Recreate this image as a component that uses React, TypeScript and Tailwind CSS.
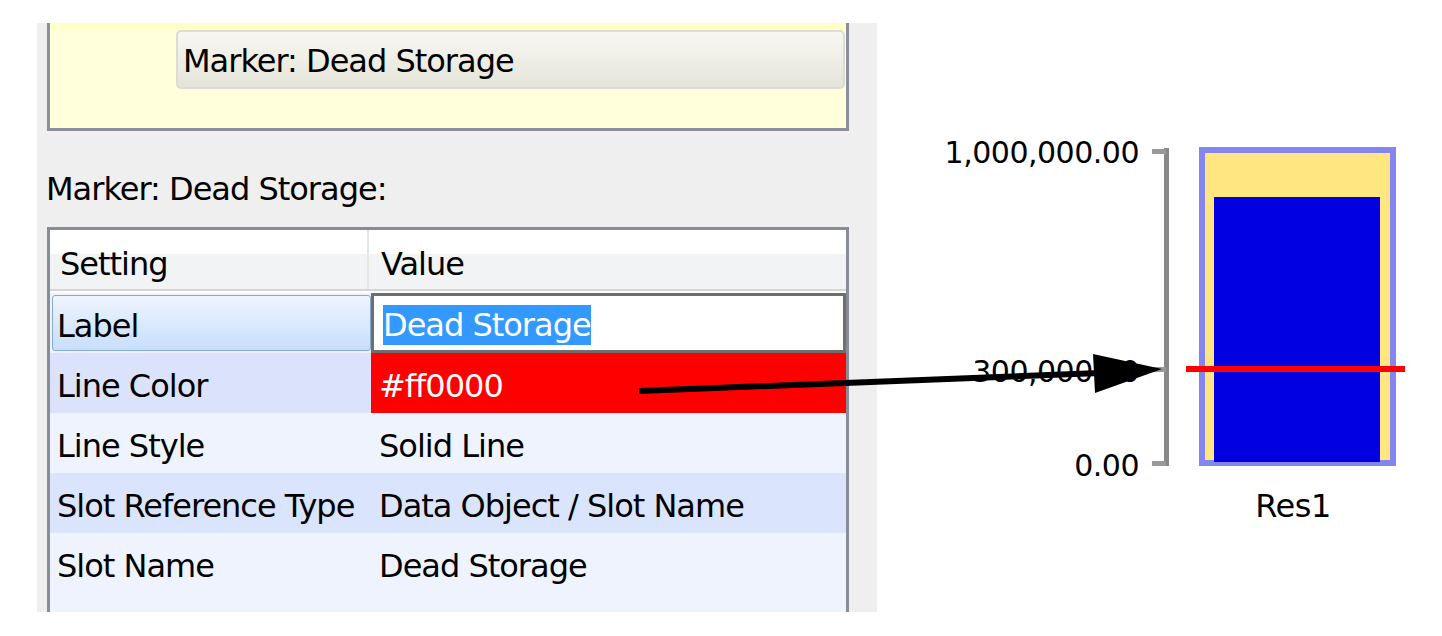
import React from "react";

type Row = { setting: string; value: string; bg: string };

const rows: Row[] = [
  { setting: "Line Style", value: "Solid Line", bg: "bg-[#eef3fe]" },
  { setting: "Slot Reference Type", value: "Data Object / Slot Name", bg: "bg-[#dae4fc]" },
  { setting: "Slot Name", value: "Dead Storage", bg: "bg-[#eef3fe]" },
];

function SettingRow({ setting, value, bg }: Row) {
  return (
    <div className={`flex h-[60px] items-center pt-[5px] ${bg}`}>
      <div className="w-[321px] pl-[7px] whitespace-nowrap">{setting}</div>
      <div className="pl-[8px] whitespace-nowrap">{value}</div>
    </div>
  );
}

function Chart() {
  return (
    <svg className="w-[565px] h-[636px] shrink-0" viewBox="877 0 565 636">
      {/* y axis */}
      <rect x={1164} y={148} width={5} height={318} fill="#888888" />
      <rect x={1152} y={149} width={14} height={5} fill="#999999" />
      <rect x={1152} y={367} width={14} height={5} fill="#999999" />
      <rect x={1152} y={461} width={14} height={5} fill="#999999" />
      <g
        fontFamily="DejaVu Sans, sans-serif"
        fontSize={30}
        letterSpacing={-0.5}
        textAnchor="end"
        dominantBaseline="central"
        fill="#000"
      >
        <text x={1139} y={152}>1,000,000.00</text>
        <text x={1139} y={371}>300,000.00</text>
        <text x={1139} y={465}>0.00</text>
      </g>
      {/* bar */}
      <rect x={1202} y={150} width={191} height={313} fill="#ffe680" stroke="#8585ee" strokeWidth={6} />
      <rect x={1214} y={197} width={166} height={265} fill="#0000e0" />
      <rect x={1186} y={366} width={219} height={6} fill="#ff0000" />
      <text
        x={1293}
        y={506}
        fontFamily="DejaVu Sans, sans-serif"
        fontSize={32}
        letterSpacing={-0.5}
        textAnchor="middle"
        dominantBaseline="central"
        fill="#000"
      >
        Res1
      </text>
    </svg>
  );
}

export default function App() {
  return (
    <div className="relative w-[1442px] h-[636px] bg-white overflow-hidden font-['DejaVu_Sans',sans-serif] text-[32px] tracking-[-1px] text-black">
      <div className="flex h-full">
        <div className="ml-[37px] mt-[23px] w-[840px] h-[589px] shrink-0 bg-[#efefef] flex flex-col">
          {/* yellow marker area */}
          <div className="ml-[10px] w-[802px] h-[108px] bg-[#ffffdc] border-x-[3px] border-b-[3px] border-[#8a8f99] flex flex-col">
            <div className="h-[6px] bg-[#ffffc6]" />
            <div className="ml-[126px] mt-px w-[669px] h-[59px] rounded-[5px] border-2 border-[#dcdcd2] bg-gradient-to-b from-[#f8f8f2] to-[#e5e4da] flex items-center pl-[5px] pt-[3px] leading-none whitespace-nowrap">
              Marker: Dead Storage
            </div>
          </div>

          <div className="ml-[9px] pt-[38px] h-[96px] leading-[40px] whitespace-nowrap">Marker: Dead Storage:</div>

          {/* settings table */}
          <div className="ml-[10px] w-[802px] flex-1 border-x-[3px] border-t-[3px] border-[#878c96] bg-[#eef3fe] flex flex-col overflow-hidden">
            <div className="h-[61px] flex bg-gradient-to-b from-white from-40% to-[#f2f3f5] to-40% border-b-2 border-[#d6d6d6]">
              <div className="w-[319px] border-r-2 border-[#e6e6e6] pl-[10px] pt-[14px] leading-[40px]">Setting</div>
              <div className="pl-[12px] pt-[14px] leading-[40px]">Value</div>
            </div>
            <div className="h-[2px] bg-white" />

            <div className="flex h-[60px] bg-[#eef3fe]">
              <div className="w-[321px] py-[2px] pl-[2px]">
                <div className="h-full rounded-[3px] border border-[#86aad6] bg-gradient-to-b from-[#eef5fe] to-[#c8defb] flex items-center pl-[4px] pt-[5px]">
                  Label
                </div>
              </div>
              <div className="flex-1 border-[3px] border-[#6e6e6e] bg-white flex items-center pl-[9px] pt-[3px]">
                <span className="bg-[#3399ff] text-white leading-[40px] whitespace-nowrap">Dead Storage</span>
              </div>
            </div>

            <div className="flex h-[60px] items-center bg-[#dae3fb]">
              <div className="w-[321px] pl-[7px] pt-[5px]">Line Color</div>
              <div className="flex-1 h-full bg-[#ff0000] text-white flex items-center pl-[8px] pt-[5px]">#ff0000</div>
            </div>

            {rows.map((r) => (
              <SettingRow key={r.setting} {...r} />
            ))}
          </div>
        </div>

        <Chart />
      </div>

      {/* annotation arrow over the table and chart */}
      <svg className="absolute inset-0 pointer-events-none" width={1442} height={636} viewBox="0 0 1442 636">
        <line x1={639} y1={391} x2={1100} y2={373} stroke="#000" strokeWidth={6} />
        <polygon points="1093,354 1162,369 1095,393" fill="#000" />
      </svg>
    </div>
  );
}
